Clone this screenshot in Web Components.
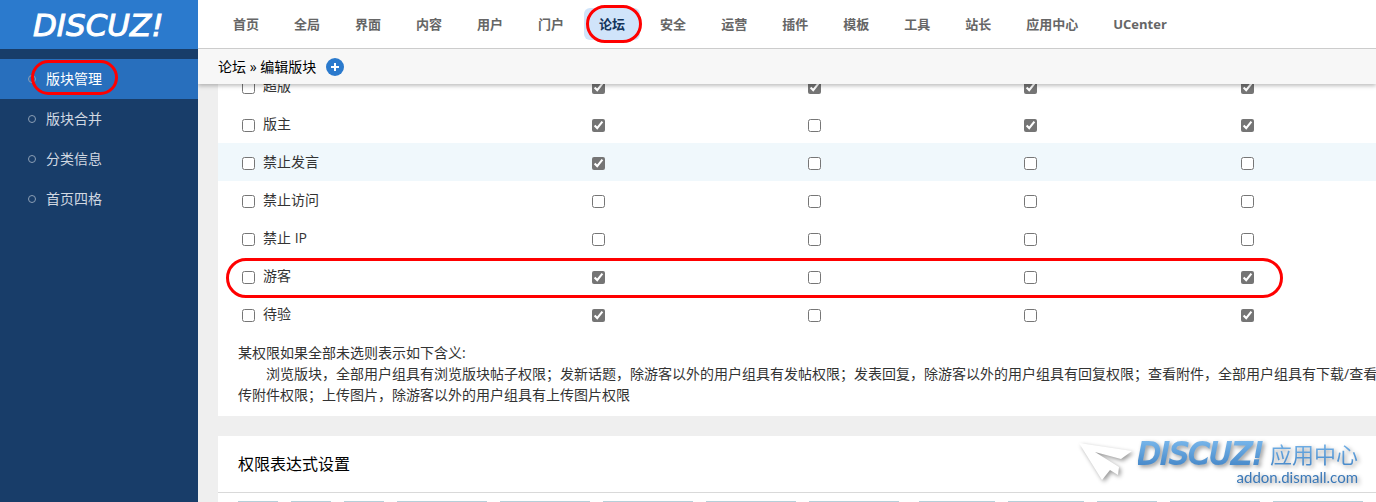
<!DOCTYPE html>
<html lang="zh-CN">
<head>
<meta charset="utf-8">
<title>编辑版块</title>
<style>
    body {
        margin: 0;
        height: 100vh;
        overflow: hidden;
        background: #efefef;
        color: #333;
        font: 14px/21px "Open Sans", "Noto Sans CJK SC", sans-serif;
    }
</style>
</head>
<body>
<admin-page>
    <discuz-logo slot="logo"></discuz-logo>

    <side-link slot="side" active>版块管理</side-link>
    <side-link slot="side">版块合并</side-link>
    <side-link slot="side">分类信息</side-link>
    <side-link slot="side">首页四格</side-link>

    <top-link slot="top">首页</top-link>
    <top-link slot="top">全局</top-link>
    <top-link slot="top">界面</top-link>
    <top-link slot="top">内容</top-link>
    <top-link slot="top">用户</top-link>
    <top-link slot="top">门户</top-link>
    <top-link slot="top" active>论坛</top-link>
    <top-link slot="top">安全</top-link>
    <top-link slot="top">运营</top-link>
    <top-link slot="top">插件</top-link>
    <top-link slot="top">模板</top-link>
    <top-link slot="top">工具</top-link>
    <top-link slot="top">站长</top-link>
    <top-link slot="top">应用中心</top-link>
    <top-link slot="top">UCenter</top-link>

    <bread-crumb slot="crumb">论坛 » 编辑版块</bread-crumb>

    <perm-table>
        某权限如果全部未选则表示如下含义:<br>
        &emsp;&emsp;浏览版块，全部用户组具有浏览版块帖子权限；发新话题，除游客以外的用户组具有发帖权限；发表回复，除游客以外的用户组具有回复权限；查看附件，全部用户组具有下载/查看<br>
        传附件权限；上传图片，除游客以外的用户组具有上传图片权限
    </perm-table>
    <formula-box>权限表达式设置</formula-box>
</admin-page>
<addon-mark></addon-mark>

<script>
    class AdminPage extends HTMLElement {
        constructor() {
            super();
            this.attachShadow({ mode: 'open' });
            this.shadowRoot.innerHTML = `
            <style>
                :host { display: flex; height: 100%; }
                aside { flex: none; width: 198px; background: #183d69; }
                .logo { display: block; background: #2b7acd; }
                nav.side { padding-top: 10px; }
                .right { flex: 1; min-width: 0; display: flex; flex-direction: column; }
                header {
                    display: flex;
                    gap: 5px;
                    padding: 8px 20px;
                    background: #fff;
                    border-bottom: 1px solid #ccc;
                }
                .crumb {
                    position: relative;
                    z-index: 1;
                    background: #f7f7f7;
                    box-shadow: 0 2px 4px rgba(0, 0, 0, .25);
                    clip-path: inset(0 0 -8px 0);
                }
                main { flex: 1; min-height: 0; overflow: hidden; padding-left: 20px; }
            </style>
            <aside>
                <div class="logo"><slot name="logo"></slot></div>
                <nav class="side"><slot name="side"></slot></nav>
            </aside>
            <div class="right">
                <header><slot name="top"></slot></header>
                <div class="crumb"><slot name="crumb"></slot></div>
                <main><slot></slot></main>
            </div>
            `;
        }
    }

    class DiscuzLogo extends HTMLElement {
        constructor() {
            super();
            this.attachShadow({ mode: 'open' });
            this.shadowRoot.innerHTML = `
            <style>
                :host { display: block; }
                a {
                    display: block;
                    padding: 1px 0 0 33px;
                    color: #fff;
                    font: italic 31px/48px "DejaVu Sans", sans-serif;
                    -webkit-text-stroke: 1px #fff;
                    text-decoration: none;
                }
            </style>
            <a href="#">DISCUZ!</a>
            `;
        }
    }

    class SideLink extends HTMLElement {
        constructor() {
            super();
            this.attachShadow({ mode: 'open' });
            this.shadowRoot.innerHTML = `
            <style>
                :host { display: block; position: relative; }
                a {
                    display: flex;
                    align-items: center;
                    gap: 10px;
                    padding-left: 28px;
                    color: #d1d8e1;
                    line-height: 40px;
                    text-decoration: none;
                }
                i {
                    box-sizing: border-box;
                    width: 8px;
                    height: 8px;
                    border: 1px solid #8b9eb4;
                    border-radius: 50%;
                }
                .ring { display: none; }
                :host([active]) a { background: #286fbd; color: #fff; }
                :host([active]) .ring {
                    display: block;
                    position: absolute;
                    box-sizing: border-box;
                    left: 31px;
                    top: 1px;
                    width: 87px;
                    height: 35px;
                    border: 3px solid #f00;
                    border-radius: 18px;
                }
            </style>
            <a href="#"><i></i><slot></slot></a>
            <span class="ring"></span>
            `;
        }
    }

    class TopLink extends HTMLElement {
        constructor() {
            super();
            this.attachShadow({ mode: 'open' });
            this.shadowRoot.innerHTML = `
            <style>
                :host { display: block; position: relative; }
                a {
                    display: block;
                    padding: 0 15px;
                    border-radius: 6px;
                    color: #666;
                    font-size: 13px;
                    font-weight: 700;
                    line-height: 32px;
                    white-space: nowrap;
                    text-decoration: none;
                }
                .ring { display: none; }
                :host([active]) a { background: #d0e4fa; color: #14345c; }
                :host([active]) .ring {
                    display: block;
                    position: absolute;
                    inset: -3px -2px -3px 2px;
                    border: 3px solid #f00;
                    border-radius: 19px;
                }
            </style>
            <a href="#"><slot></slot></a>
            <span class="ring"></span>
            `;
        }
    }

    class BreadCrumb extends HTMLElement {
        constructor() {
            super();
            this.attachShadow({ mode: 'open' });
            this.shadowRoot.innerHTML = `
            <style>
                :host {
                    display: flex;
                    align-items: center;
                    gap: 10px;
                    padding-left: 20px;
                    line-height: 35px;
                    color: #000;
                }
                button {
                    display: flex;
                    width: 18px;
                    height: 18px;
                    padding: 0;
                    border: 0;
                    background: none;
                }
            </style>
            <slot></slot>
            <button aria-label="添加">
                <svg width="18" height="18" viewBox="0 0 18 18">
                    <circle cx="9" cy="9" r="9" fill="#2b7acd"/>
                    <path d="M9 5v8M5 9h8" stroke="#fff" stroke-width="2"/>
                </svg>
            </button>
            `;
        }
    }

    // 1 = ticked, one digit per permission column
    const groups = [
        ['超版', '1111'],
        ['版主', '1011'],
        ['禁止发言', '1000'],
        ['禁止访问', '0000'],
        ['禁止 IP', '0000'],
        ['游客', '1001'],
        ['待验', '1001'],
    ];
    const perms = ['浏览版块', '发新话题', '发表回复', '查看附件'];

    class PermTable extends HTMLElement {
        constructor() {
            super();
            this.attachShadow({ mode: 'open' });
        }

        connectedCallback() {
            this.render();
        }

        render() {
            const rows = groups.map(([name, ticks]) => `
                <tr class="${name === '禁止发言' ? 'hover' : ''}">
                    <td>
                        <label><input type="checkbox">${name}</label>
                        ${name === '游客' ? '<span class="ring"></span>' : ''}
                    </td>
                    ${perms.map((p, n) => `<td><input type="checkbox" aria-label="${name} ${p}" ${ticks[n] === '1' ? 'checked' : ''}></td>`).join('')}
                </tr>`).join('');

            this.shadowRoot.innerHTML = `
            <style>
                :host {
                    display: block;
                    margin: -17px 0 20px;
                    padding-bottom: 11px;
                    background: #fff;
                }
                table { width: 100%; table-layout: fixed; border-collapse: collapse; }
                col { width: 18.67%; }
                col.name { width: 32.3%; }
                col.last { width: auto; }
                tr { position: relative; }
                tr.hover { background: #f0f8fc; }
                td { height: 38px; padding: 0; vertical-align: middle; }
                td:first-child { padding-left: 24px; }
                label { display: flex; align-items: center; gap: 8px; padding-bottom: 2px; }
                input {
                    display: block;
                    width: 13px;
                    height: 13px;
                    margin: 2px 0 0;
                    accent-color: #757575;
                }
                label input { margin-top: 4px; }
                .ring {
                    position: absolute;
                    inset: 1px 8% -3px 8px;
                    border: 3px solid #f00;
                    border-radius: 20px;
                    pointer-events: none;
                }
                p { margin: 9px 0 0; padding-left: 20px; white-space: nowrap; }
            </style>
            <table>
                <colgroup><col class="name"><col><col><col><col class="last"></colgroup>
                <tbody>${rows}</tbody>
            </table>
            <p><slot></slot></p>
            `;
        }
    }

    class FormulaBox extends HTMLElement {
        constructor() {
            super();
            this.attachShadow({ mode: 'open' });
            this.shadowRoot.innerHTML = `
            <style>
                :host { display: block; background: #fff; }
                h3 {
                    margin: 0;
                    padding-left: 20px;
                    border-bottom: 1px solid #d9d9d9;
                    color: #000;
                    font-size: 16px;
                    font-weight: 400;
                    line-height: 56px;
                }
                .keys, .group { display: flex; }
                .keys { gap: 20px; padding: 8px 20px; overflow: hidden; }
                .group { gap: 13px; }
                button {
                    flex: none;
                    width: 90px;
                    height: 26px;
                    border: 1px solid #b5cfd9;
                    background: #fff;
                }
                .s { width: 40px; }
                .m { width: 60px; }
                .l { width: 76px; }
            </style>
            <h3><slot></slot></h3>
            <div class="keys">
                <div class="group">
                    <button class="s"></button><button class="s"></button><button class="s"></button>
                    <button></button><button></button><button></button><button></button><button></button>
                </div>
                <div class="group">
                    <button class="l"></button><button class="l"></button><button class="m"></button>
                    <button></button><button></button><button></button>
                </div>
            </div>
            `;
        }
    }

    class AddonMark extends HTMLElement {
        constructor() {
            super();
            this.attachShadow({ mode: 'open' });
            this.shadowRoot.innerHTML = `
            <style>
                :host {
                    position: fixed;
                    z-index: 2;
                    right: 18px;
                    bottom: 15px;
                    display: flex;
                    gap: 4px;
                    filter: drop-shadow(2px 2px 2px rgba(0, 0, 0, .4));
                }
                .words { text-align: right; }
                .line { display: flex; align-items: center; gap: 6px; height: 26px; }
                .brand, .cn {
                    background: linear-gradient(#7ab8ec, #4284c6);
                    -webkit-background-clip: text;
                    background-clip: text;
                    color: transparent;
                }
                .brand {
                    font: italic 30px/30px "DejaVu Sans", sans-serif;
                    -webkit-text-stroke: 2px transparent;
                }
                .cn { font-size: 22px; line-height: 30px; }
                .site { display: block; color: #3a78b8; font: 15px/20px Lato, sans-serif; }
            </style>
            <svg width="56" height="46" viewBox="0 0 56 46">
                <path d="M1 2 54 10 43 18 17 11 41 26 40 34 32 29 24 39Z" fill="#fff"/>
            </svg>
            <div class="words">
                <div class="line"><span class="brand">DISCUZ!</span><span class="cn">应用中心</span></div>
                <span class="site">addon.dismall.com</span>
            </div>
            `;
        }
    }

    customElements.define('admin-page', AdminPage);
    customElements.define('discuz-logo', DiscuzLogo);
    customElements.define('side-link', SideLink);
    customElements.define('top-link', TopLink);
    customElements.define('bread-crumb', BreadCrumb);
    customElements.define('perm-table', PermTable);
    customElements.define('formula-box', FormulaBox);
    customElements.define('addon-mark', AddonMark);
</script>
</body>
</html>
